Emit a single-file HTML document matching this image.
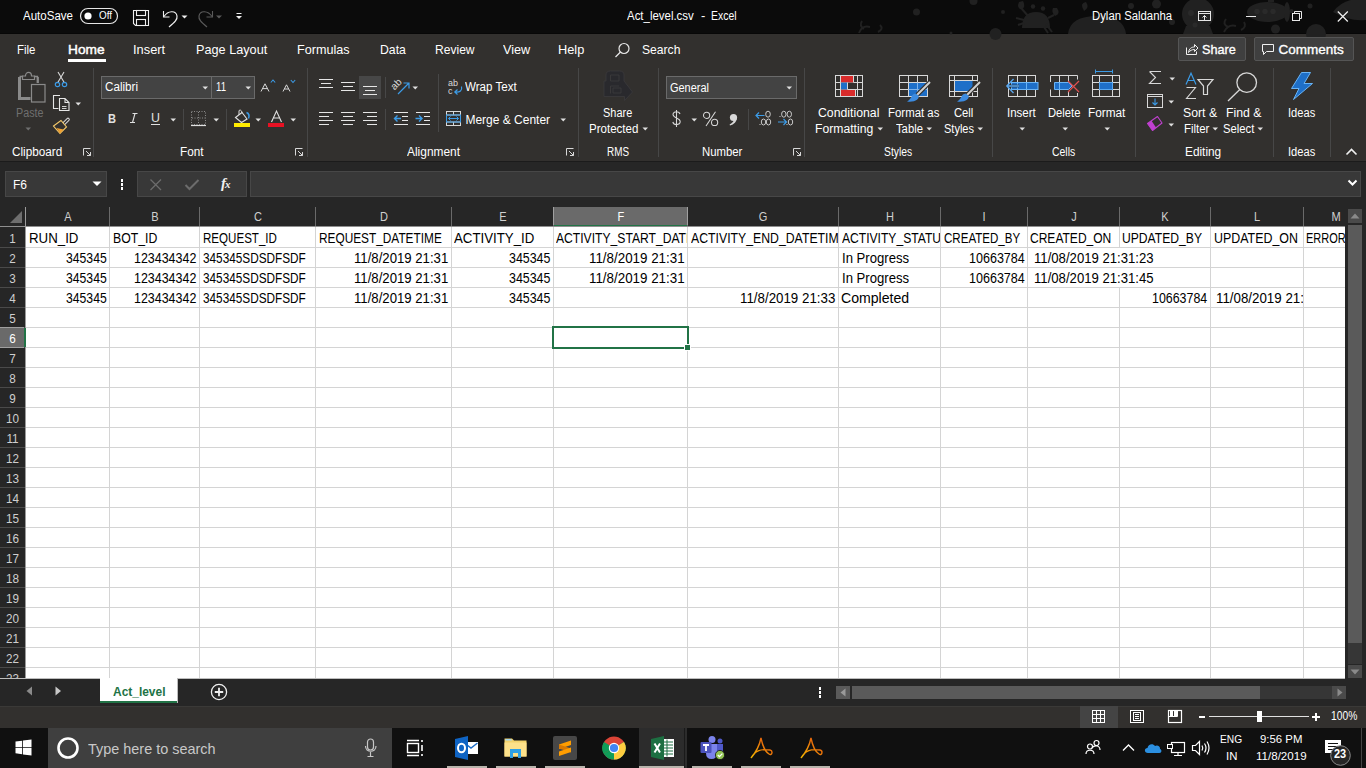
<!DOCTYPE html>
<html><head><meta charset="utf-8">
<style>
*{margin:0;padding:0;box-sizing:border-box}
html,body{width:1366px;height:768px;overflow:hidden;background:#32302e;font-family:"Liberation Sans",sans-serif}
.a{position:absolute}
.t{position:absolute;white-space:nowrap;line-height:1;transform-origin:0 0}
svg{position:absolute;overflow:visible}
</style></head><body>

<div class="a" style="left:0px;top:0px;width:1366px;height:34px;background:#0b0b0b;"></div>
<div class="a" style="left:0px;top:33px;width:1366px;height:1px;background:#070707;"></div>
<div class="a" style="left:0px;top:34px;width:1366px;height:127px;background:#32302e;"></div>
<div class="a" style="left:0px;top:161px;width:1366px;height:1px;background:#1b1b1b;"></div>
<div class="a" style="left:0px;top:162px;width:1366px;height:45px;background:#262626;"></div>
<div class="a" style="left:0px;top:678px;width:1366px;height:28px;background:#262626;"></div>
<div class="a" style="left:0px;top:706px;width:1366px;height:22px;background:#32302e;"></div>
<div class="a" style="left:0px;top:706px;width:1366px;height:1px;background:#3a3937;"></div>
<div class="a" style="left:0px;top:728px;width:1366px;height:40px;background:#101010;"></div>
<div class="a" style="left:26px;top:227px;width:1319px;height:451px;background:#ffffff;"></div>
<div class="a" style="left:0px;top:207px;width:1345px;height:20px;background:#262626;"></div>
<div class="a" style="left:0px;top:227px;width:25px;height:451px;background:#262626;"></div>
<div class="a" style="left:554px;top:207px;width:133px;height:19px;background:#6a6a6a;"></div>
<div class="a" style="left:553px;top:225px;width:135px;height:2px;background:#217346;"></div>
<div class="a" style="left:0px;top:328px;width:24px;height:19px;background:#6a6a6a;"></div>
<div class="a" style="left:24px;top:327px;width:2px;height:21px;background:#217346;"></div>
<svg style="left:0;top:0" width="1366" height="768"><line x1="26" y1="247.5" x2="1345" y2="247.5" stroke="#d4d4d4" stroke-width="1"/><line x1="0" y1="247.5" x2="25" y2="247.5" stroke="#4a4a4a" stroke-width="1"/><line x1="26" y1="267.5" x2="1345" y2="267.5" stroke="#d4d4d4" stroke-width="1"/><line x1="0" y1="267.5" x2="25" y2="267.5" stroke="#4a4a4a" stroke-width="1"/><line x1="26" y1="287.5" x2="1345" y2="287.5" stroke="#d4d4d4" stroke-width="1"/><line x1="0" y1="287.5" x2="25" y2="287.5" stroke="#4a4a4a" stroke-width="1"/><line x1="26" y1="307.5" x2="1345" y2="307.5" stroke="#d4d4d4" stroke-width="1"/><line x1="0" y1="307.5" x2="25" y2="307.5" stroke="#4a4a4a" stroke-width="1"/><line x1="26" y1="327.5" x2="1345" y2="327.5" stroke="#d4d4d4" stroke-width="1"/><line x1="0" y1="327.5" x2="25" y2="327.5" stroke="#4a4a4a" stroke-width="1"/><line x1="26" y1="347.5" x2="1345" y2="347.5" stroke="#d4d4d4" stroke-width="1"/><line x1="0" y1="347.5" x2="25" y2="347.5" stroke="#4a4a4a" stroke-width="1"/><line x1="26" y1="367.5" x2="1345" y2="367.5" stroke="#d4d4d4" stroke-width="1"/><line x1="0" y1="367.5" x2="25" y2="367.5" stroke="#4a4a4a" stroke-width="1"/><line x1="26" y1="387.5" x2="1345" y2="387.5" stroke="#d4d4d4" stroke-width="1"/><line x1="0" y1="387.5" x2="25" y2="387.5" stroke="#4a4a4a" stroke-width="1"/><line x1="26" y1="407.5" x2="1345" y2="407.5" stroke="#d4d4d4" stroke-width="1"/><line x1="0" y1="407.5" x2="25" y2="407.5" stroke="#4a4a4a" stroke-width="1"/><line x1="26" y1="427.5" x2="1345" y2="427.5" stroke="#d4d4d4" stroke-width="1"/><line x1="0" y1="427.5" x2="25" y2="427.5" stroke="#4a4a4a" stroke-width="1"/><line x1="26" y1="447.5" x2="1345" y2="447.5" stroke="#d4d4d4" stroke-width="1"/><line x1="0" y1="447.5" x2="25" y2="447.5" stroke="#4a4a4a" stroke-width="1"/><line x1="26" y1="467.5" x2="1345" y2="467.5" stroke="#d4d4d4" stroke-width="1"/><line x1="0" y1="467.5" x2="25" y2="467.5" stroke="#4a4a4a" stroke-width="1"/><line x1="26" y1="487.5" x2="1345" y2="487.5" stroke="#d4d4d4" stroke-width="1"/><line x1="0" y1="487.5" x2="25" y2="487.5" stroke="#4a4a4a" stroke-width="1"/><line x1="26" y1="507.5" x2="1345" y2="507.5" stroke="#d4d4d4" stroke-width="1"/><line x1="0" y1="507.5" x2="25" y2="507.5" stroke="#4a4a4a" stroke-width="1"/><line x1="26" y1="527.5" x2="1345" y2="527.5" stroke="#d4d4d4" stroke-width="1"/><line x1="0" y1="527.5" x2="25" y2="527.5" stroke="#4a4a4a" stroke-width="1"/><line x1="26" y1="547.5" x2="1345" y2="547.5" stroke="#d4d4d4" stroke-width="1"/><line x1="0" y1="547.5" x2="25" y2="547.5" stroke="#4a4a4a" stroke-width="1"/><line x1="26" y1="567.5" x2="1345" y2="567.5" stroke="#d4d4d4" stroke-width="1"/><line x1="0" y1="567.5" x2="25" y2="567.5" stroke="#4a4a4a" stroke-width="1"/><line x1="26" y1="587.5" x2="1345" y2="587.5" stroke="#d4d4d4" stroke-width="1"/><line x1="0" y1="587.5" x2="25" y2="587.5" stroke="#4a4a4a" stroke-width="1"/><line x1="26" y1="607.5" x2="1345" y2="607.5" stroke="#d4d4d4" stroke-width="1"/><line x1="0" y1="607.5" x2="25" y2="607.5" stroke="#4a4a4a" stroke-width="1"/><line x1="26" y1="627.5" x2="1345" y2="627.5" stroke="#d4d4d4" stroke-width="1"/><line x1="0" y1="627.5" x2="25" y2="627.5" stroke="#4a4a4a" stroke-width="1"/><line x1="26" y1="647.5" x2="1345" y2="647.5" stroke="#d4d4d4" stroke-width="1"/><line x1="0" y1="647.5" x2="25" y2="647.5" stroke="#4a4a4a" stroke-width="1"/><line x1="26" y1="667.5" x2="1345" y2="667.5" stroke="#d4d4d4" stroke-width="1"/><line x1="0" y1="667.5" x2="25" y2="667.5" stroke="#4a4a4a" stroke-width="1"/><line x1="109.5" y1="227" x2="109.5" y2="678" stroke="#d4d4d4" stroke-width="1"/><line x1="109.5" y1="207" x2="109.5" y2="226" stroke="#6a6a6a" stroke-width="1"/><line x1="199.5" y1="227" x2="199.5" y2="678" stroke="#d4d4d4" stroke-width="1"/><line x1="199.5" y1="207" x2="199.5" y2="226" stroke="#6a6a6a" stroke-width="1"/><line x1="315.5" y1="227" x2="315.5" y2="678" stroke="#d4d4d4" stroke-width="1"/><line x1="315.5" y1="207" x2="315.5" y2="226" stroke="#6a6a6a" stroke-width="1"/><line x1="451.5" y1="227" x2="451.5" y2="678" stroke="#d4d4d4" stroke-width="1"/><line x1="451.5" y1="207" x2="451.5" y2="226" stroke="#6a6a6a" stroke-width="1"/><line x1="553.5" y1="227" x2="553.5" y2="678" stroke="#d4d4d4" stroke-width="1"/><line x1="553.5" y1="207" x2="553.5" y2="226" stroke="#6a6a6a" stroke-width="1"/><line x1="687.5" y1="227" x2="687.5" y2="678" stroke="#d4d4d4" stroke-width="1"/><line x1="687.5" y1="207" x2="687.5" y2="226" stroke="#6a6a6a" stroke-width="1"/><line x1="838.5" y1="227" x2="838.5" y2="678" stroke="#d4d4d4" stroke-width="1"/><line x1="838.5" y1="207" x2="838.5" y2="226" stroke="#6a6a6a" stroke-width="1"/><line x1="940.5" y1="227" x2="940.5" y2="678" stroke="#d4d4d4" stroke-width="1"/><line x1="940.5" y1="207" x2="940.5" y2="226" stroke="#6a6a6a" stroke-width="1"/><line x1="1027.5" y1="227" x2="1027.5" y2="678" stroke="#d4d4d4" stroke-width="1"/><line x1="1027.5" y1="207" x2="1027.5" y2="226" stroke="#6a6a6a" stroke-width="1"/><line x1="1119.5" y1="227" x2="1119.5" y2="678" stroke="#d4d4d4" stroke-width="1"/><line x1="1119.5" y1="207" x2="1119.5" y2="226" stroke="#6a6a6a" stroke-width="1"/><line x1="1210.5" y1="227" x2="1210.5" y2="678" stroke="#d4d4d4" stroke-width="1"/><line x1="1210.5" y1="207" x2="1210.5" y2="226" stroke="#6a6a6a" stroke-width="1"/><line x1="1303.5" y1="227" x2="1303.5" y2="678" stroke="#d4d4d4" stroke-width="1"/><line x1="1303.5" y1="207" x2="1303.5" y2="226" stroke="#6a6a6a" stroke-width="1"/><line x1="0" y1="226.5" x2="1345" y2="226.5" stroke="#8f8f8f" stroke-width="1"/><line x1="25.5" y1="207" x2="25.5" y2="678" stroke="#9a9a9a" stroke-width="1"/></svg>
<div class="a" style="left:0px;top:327px;width:24px;height:1px;background:#a0a0a0;"></div>
<div class="a" style="left:0px;top:347px;width:24px;height:1px;background:#a0a0a0;"></div>
<div class="a" style="left:24px;top:328px;width:2px;height:19px;background:#217346;"></div>
<div class="a" style="left:553px;top:207px;width:1px;height:18px;background:#a0a0a0;"></div>
<div class="a" style="left:687px;top:207px;width:1px;height:18px;background:#a0a0a0;"></div>
<svg style="left:0;top:207px" width="25" height="20"><path d="M10 16 L22 4 L22 16 Z" fill="#6e6e6e"/></svg>
<div class="t" style="left:47.5px;width:40px;text-align:center;top:210.00px;font-size:13px;transform:scaleX(0.85);transform-origin:50% 0;color:#d0d0d0">A</div>
<div class="t" style="left:134.5px;width:40px;text-align:center;top:210.00px;font-size:13px;transform:scaleX(0.85);transform-origin:50% 0;color:#d0d0d0">B</div>
<div class="t" style="left:237.5px;width:40px;text-align:center;top:210.00px;font-size:13px;transform:scaleX(0.85);transform-origin:50% 0;color:#d0d0d0">C</div>
<div class="t" style="left:363.5px;width:40px;text-align:center;top:210.00px;font-size:13px;transform:scaleX(0.85);transform-origin:50% 0;color:#d0d0d0">D</div>
<div class="t" style="left:482.5px;width:40px;text-align:center;top:210.00px;font-size:13px;transform:scaleX(0.85);transform-origin:50% 0;color:#d0d0d0">E</div>
<div class="t" style="left:600.5px;width:40px;text-align:center;top:210.00px;font-size:13px;transform:scaleX(0.85);transform-origin:50% 0;color:#ffffff">F</div>
<div class="t" style="left:743.0px;width:40px;text-align:center;top:210.00px;font-size:13px;transform:scaleX(0.85);transform-origin:50% 0;color:#d0d0d0">G</div>
<div class="t" style="left:869.5px;width:40px;text-align:center;top:210.00px;font-size:13px;transform:scaleX(0.85);transform-origin:50% 0;color:#d0d0d0">H</div>
<div class="t" style="left:964.0px;width:40px;text-align:center;top:210.00px;font-size:13px;transform:scaleX(0.85);transform-origin:50% 0;color:#d0d0d0">I</div>
<div class="t" style="left:1053.5px;width:40px;text-align:center;top:210.00px;font-size:13px;transform:scaleX(0.85);transform-origin:50% 0;color:#d0d0d0">J</div>
<div class="t" style="left:1145.0px;width:40px;text-align:center;top:210.00px;font-size:13px;transform:scaleX(0.85);transform-origin:50% 0;color:#d0d0d0">K</div>
<div class="t" style="left:1237.0px;width:40px;text-align:center;top:210.00px;font-size:13px;transform:scaleX(0.85);transform-origin:50% 0;color:#d0d0d0">L</div>
<div class="t" style="left:1315.5px;width:40px;text-align:center;top:210.00px;font-size:13px;transform:scaleX(0.85);transform-origin:50% 0;color:#d0d0d0">M</div>
<div class="a" style="left:0;top:227px;width:25px;height:451px;overflow:hidden">
<div class="t" style="left:0px;width:25px;text-align:center;top:5.00px;font-size:13px;transform:scaleX(0.9);transform-origin:50% 0;color:#cfcfcf">1</div>
<div class="t" style="left:0px;width:25px;text-align:center;top:25.00px;font-size:13px;transform:scaleX(0.9);transform-origin:50% 0;color:#cfcfcf">2</div>
<div class="t" style="left:0px;width:25px;text-align:center;top:45.00px;font-size:13px;transform:scaleX(0.9);transform-origin:50% 0;color:#cfcfcf">3</div>
<div class="t" style="left:0px;width:25px;text-align:center;top:65.00px;font-size:13px;transform:scaleX(0.9);transform-origin:50% 0;color:#cfcfcf">4</div>
<div class="t" style="left:0px;width:25px;text-align:center;top:85.00px;font-size:13px;transform:scaleX(0.9);transform-origin:50% 0;color:#cfcfcf">5</div>
<div class="t" style="left:0px;width:25px;text-align:center;top:105.00px;font-size:13px;transform:scaleX(0.9);transform-origin:50% 0;color:#ffffff">6</div>
<div class="t" style="left:0px;width:25px;text-align:center;top:125.00px;font-size:13px;transform:scaleX(0.9);transform-origin:50% 0;color:#cfcfcf">7</div>
<div class="t" style="left:0px;width:25px;text-align:center;top:145.00px;font-size:13px;transform:scaleX(0.9);transform-origin:50% 0;color:#cfcfcf">8</div>
<div class="t" style="left:0px;width:25px;text-align:center;top:165.00px;font-size:13px;transform:scaleX(0.9);transform-origin:50% 0;color:#cfcfcf">9</div>
<div class="t" style="left:0px;width:25px;text-align:center;top:185.00px;font-size:13px;transform:scaleX(0.9);transform-origin:50% 0;color:#cfcfcf">10</div>
<div class="t" style="left:0px;width:25px;text-align:center;top:205.00px;font-size:13px;transform:scaleX(0.9);transform-origin:50% 0;color:#cfcfcf">11</div>
<div class="t" style="left:0px;width:25px;text-align:center;top:225.00px;font-size:13px;transform:scaleX(0.9);transform-origin:50% 0;color:#cfcfcf">12</div>
<div class="t" style="left:0px;width:25px;text-align:center;top:245.00px;font-size:13px;transform:scaleX(0.9);transform-origin:50% 0;color:#cfcfcf">13</div>
<div class="t" style="left:0px;width:25px;text-align:center;top:265.00px;font-size:13px;transform:scaleX(0.9);transform-origin:50% 0;color:#cfcfcf">14</div>
<div class="t" style="left:0px;width:25px;text-align:center;top:285.00px;font-size:13px;transform:scaleX(0.9);transform-origin:50% 0;color:#cfcfcf">15</div>
<div class="t" style="left:0px;width:25px;text-align:center;top:305.00px;font-size:13px;transform:scaleX(0.9);transform-origin:50% 0;color:#cfcfcf">16</div>
<div class="t" style="left:0px;width:25px;text-align:center;top:325.00px;font-size:13px;transform:scaleX(0.9);transform-origin:50% 0;color:#cfcfcf">17</div>
<div class="t" style="left:0px;width:25px;text-align:center;top:345.00px;font-size:13px;transform:scaleX(0.9);transform-origin:50% 0;color:#cfcfcf">18</div>
<div class="t" style="left:0px;width:25px;text-align:center;top:365.00px;font-size:13px;transform:scaleX(0.9);transform-origin:50% 0;color:#cfcfcf">19</div>
<div class="t" style="left:0px;width:25px;text-align:center;top:385.00px;font-size:13px;transform:scaleX(0.9);transform-origin:50% 0;color:#cfcfcf">20</div>
<div class="t" style="left:0px;width:25px;text-align:center;top:405.00px;font-size:13px;transform:scaleX(0.9);transform-origin:50% 0;color:#cfcfcf">21</div>
<div class="t" style="left:0px;width:25px;text-align:center;top:425.00px;font-size:13px;transform:scaleX(0.9);transform-origin:50% 0;color:#cfcfcf">22</div>
<div class="t" style="left:0px;width:25px;text-align:center;top:445.00px;font-size:13px;transform:scaleX(0.9);transform-origin:50% 0;color:#cfcfcf">23</div>
</div>
<div class="a" style="left:1119px;top:248px;width:1px;height:19px;background:#ffffff;"></div>
<div class="a" style="left:1119px;top:268px;width:1px;height:19px;background:#ffffff;"></div>
<div class="t" style="left:29.00px;top:231.15px;font-size:14px;color:#000000;transform:scaleX(0.9482);">RUN_ID</div>
<div class="t" style="left:112.50px;top:231.15px;font-size:14px;color:#000000;transform:scaleX(0.8764);">BOT_ID</div>
<div class="t" style="left:202.60px;top:231.15px;font-size:14px;color:#000000;transform:scaleX(0.8262);">REQUEST_ID</div>
<div class="t" style="left:318.70px;top:231.15px;font-size:14px;color:#000000;transform:scaleX(0.8457);">REQUEST_DATETIME</div>
<div class="t" style="left:454.20px;top:231.15px;font-size:14px;color:#000000;transform:scaleX(0.9469);">ACTIVITY_ID</div>
<div class="t" style="left:65.60px;top:251.15px;font-size:14px;color:#000000;transform:scaleX(0.8715);">345345</div>
<div class="t" style="left:134.00px;top:251.15px;font-size:14px;color:#000000;transform:scaleX(0.8894);">123434342</div>
<div class="t" style="left:202.60px;top:251.15px;font-size:14px;color:#000000;transform:scaleX(0.8416);">345345SDSDFSDF</div>
<div class="t" style="left:353.90px;top:251.15px;font-size:14px;color:#000000;transform:scaleX(0.9406);">11/8/2019 21:31</div>
<div class="t" style="left:509.00px;top:251.15px;font-size:14px;color:#000000;transform:scaleX(0.8865);">345345</div>
<div class="t" style="left:65.60px;top:271.15px;font-size:14px;color:#000000;transform:scaleX(0.8715);">345345</div>
<div class="t" style="left:134.00px;top:271.15px;font-size:14px;color:#000000;transform:scaleX(0.8894);">123434342</div>
<div class="t" style="left:202.60px;top:271.15px;font-size:14px;color:#000000;transform:scaleX(0.8416);">345345SDSDFSDF</div>
<div class="t" style="left:353.90px;top:271.15px;font-size:14px;color:#000000;transform:scaleX(0.9406);">11/8/2019 21:31</div>
<div class="t" style="left:509.00px;top:271.15px;font-size:14px;color:#000000;transform:scaleX(0.8865);">345345</div>
<div class="t" style="left:65.60px;top:291.15px;font-size:14px;color:#000000;transform:scaleX(0.8715);">345345</div>
<div class="t" style="left:134.00px;top:291.15px;font-size:14px;color:#000000;transform:scaleX(0.8894);">123434342</div>
<div class="t" style="left:202.60px;top:291.15px;font-size:14px;color:#000000;transform:scaleX(0.8416);">345345SDSDFSDF</div>
<div class="t" style="left:353.90px;top:291.15px;font-size:14px;color:#000000;transform:scaleX(0.9406);">11/8/2019 21:31</div>
<div class="t" style="left:509.00px;top:291.15px;font-size:14px;color:#000000;transform:scaleX(0.8865);">345345</div>
<div class="t" style="left:589.20px;top:251.15px;font-size:14px;color:#000000;transform:scaleX(0.9546);">11/8/2019 21:31</div>
<div class="t" style="left:841.60px;top:251.15px;font-size:14px;color:#000000;transform:scaleX(0.9385);">In Progress</div>
<div class="t" style="left:969.00px;top:251.15px;font-size:14px;color:#000000;transform:scaleX(0.8957);">10663784</div>
<div class="t" style="left:589.20px;top:271.15px;font-size:14px;color:#000000;transform:scaleX(0.9546);">11/8/2019 21:31</div>
<div class="t" style="left:841.60px;top:271.15px;font-size:14px;color:#000000;transform:scaleX(0.9385);">In Progress</div>
<div class="t" style="left:969.00px;top:271.15px;font-size:14px;color:#000000;transform:scaleX(0.8957);">10663784</div>
<div class="t" style="left:1033.70px;top:251.15px;font-size:14px;color:#000000;transform:scaleX(0.9388);">11/08/2019 21:31:23</div>
<div class="t" style="left:1033.70px;top:271.15px;font-size:14px;color:#000000;transform:scaleX(0.9388);">11/08/2019 21:31:45</div>
<div class="t" style="left:739.70px;top:291.15px;font-size:14px;color:#000000;transform:scaleX(0.9516);">11/8/2019 21:33</div>
<div class="t" style="left:841.30px;top:291.15px;font-size:14px;color:#000000;transform:scaleX(1.0074);">Completed</div>
<div class="t" style="left:1152.20px;top:291.15px;font-size:14px;color:#000000;transform:scaleX(0.8860);">10663784</div>
<div class="t" style="left:943.60px;top:231.15px;font-size:14px;color:#000000;transform:scaleX(0.8256);">CREATED_BY</div>
<div class="t" style="left:1030.00px;top:231.15px;font-size:14px;color:#000000;transform:scaleX(0.8590);">CREATED_ON</div>
<div class="t" style="left:1122.00px;top:231.15px;font-size:14px;color:#000000;transform:scaleX(0.8667);">UPDATED_BY</div>
<div class="t" style="left:1213.50px;top:231.15px;font-size:14px;color:#000000;transform:scaleX(0.8864);">UPDATED_ON</div>
<div class="a" style="left:554px;top:227px;width:133px;height:80px;overflow:hidden"><div class="t" style="left:2.00px;top:4.15px;font-size:14px;color:#000000;transform:scaleX(0.8658)">ACTIVITY_START_DATETIME</div></div>
<div class="a" style="left:688px;top:227px;width:150px;height:80px;overflow:hidden"><div class="t" style="left:2.80px;top:4.15px;font-size:14px;color:#000000;transform:scaleX(0.8763)">ACTIVITY_END_DATETIME</div></div>
<div class="a" style="left:839px;top:227px;width:101px;height:80px;overflow:hidden"><div class="t" style="left:2.50px;top:4.15px;font-size:14px;color:#000000;transform:scaleX(0.8639)">ACTIVITY_STATUS</div></div>
<div class="a" style="left:1304px;top:227px;width:41px;height:80px;overflow:hidden"><div class="t" style="left:2.30px;top:4.15px;font-size:14px;color:#000000;transform:scaleX(0.7854)">ERROR_MESSAGE</div></div>
<div class="a" style="left:1211px;top:227px;width:92px;height:80px;overflow:hidden"><div class="t" style="left:5.30px;top:64.15px;font-size:14px;color:#000000;transform:scaleX(0.9514)">11/08/2019 21:33:10</div></div>
<div class="a" style="left:552px;top:326px;width:137px;height:23px;background:transparent;border:2px solid #217346"></div>
<div class="a" style="left:684px;top:344px;width:7px;height:7px;background:#ffffff;"></div>
<div class="a" style="left:685px;top:345px;width:5px;height:5px;background:#217346;"></div>
<svg style="left:0;top:0" width="1366" height="33"><g fill="#212121" stroke="none"><circle cx="916.5" cy="12" r="3.5"/><circle cx="973.5" cy="1" r="4"/><circle cx="1003" cy="12" r="2"/><circle cx="995.5" cy="34" r="6"/><circle cx="951" cy="33" r="1.5"/><path d="M1022 28 Q1022 12 1036 12 Q1050 12 1050 28 Z"/><circle cx="1033" cy="6.5" r="2.2"/><circle cx="1043" cy="8.5" r="2.2"/><path d="M1019 2 Q1016 8 1022 10 Q1026 6 1023 1 Z"/><path d="M1057 8 Q1061 14 1055 16 Q1051 12 1053 8 Z"/></g><g stroke="#212121" stroke-width="2" fill="none"><path d="M1022 9 L1028 16"/><path d="M1054 15 L1048 18"/><path d="M1016 18 L1024 20"/><path d="M1018 25 L1024 23"/><path d="M1046 24 L1052 32"/><path d="M1044 27 L1048 33"/><path d="M859 33 Q862 25 870 27 M862 21 Q859 26 864 29 M880 25 Q884 29 878 32"/><path d="M1224 32 Q1228 24 1236 26 M1226 19 Q1222 24 1228 27 M1244 22 Q1247 27 1241 30"/></g><g fill="#212121"><path d="M1068 34 Q1070 16 1097 16 Q1124 16 1126 34 Z"/><path d="M1084 11 Q1079 3 1086 2 Q1090 8 1084 11 Z"/><circle cx="1131" cy="6" r="3"/><circle cx="1156.5" cy="4" r="4.5"/><circle cx="1172" cy="22" r="3"/><circle cx="1198" cy="14" r="16"/><path d="M1186 26 H1210 L1213 34 H1183 Z"/><ellipse cx="1267.5" cy="12" rx="20.5" ry="10"/><ellipse cx="1287" cy="12" rx="3" ry="10"/><path d="M1268 2 V-2 H1274 V2 Z"/><circle cx="1291.5" cy="11" r="2"/><circle cx="1275.5" cy="29" r="4.5"/><circle cx="1310" cy="6" r="2.5"/><circle cx="1316" cy="34" r="10"/><path d="M1333 12 Q1345 -4 1366 0 V20 Q1350 22 1333 12 Z"/></g><g fill="#2a2a2a"><circle cx="1257" cy="11.5" r="2.7"/><circle cx="1265" cy="11.5" r="2.7"/><circle cx="1273" cy="11.5" r="2.7"/><circle cx="1191" cy="13" r="3"/><circle cx="1195" cy="25" r="2.5"/></g></svg>
<div class="t" style="left:22.90px;top:10.22px;font-size:12.5px;color:#ffffff;transform:scaleX(0.9225);">AutoSave</div>
<svg style="left:79px;top:7px" width="42" height="18"><rect x="1.5" y="1.5" width="37" height="15" rx="7.5" fill="none" stroke="#e6e6e6" stroke-width="1.2"/><circle cx="9" cy="9" r="3.6" fill="#fff"/></svg>
<div class="t" style="left:99.00px;top:10.49px;font-size:11px;color:#ffffff;transform:scaleX(0.8966);">Off</div>
<svg style="left:132px;top:9px" width="20" height="20"><path d="M1.5 1.5 H16.5 V16.5 H3.5 L1.5 14.5 Z" fill="none" stroke="#f0f0f0" stroke-width="1.1"/><rect x="4.5" y="1.5" width="9" height="5" fill="none" stroke="#f0f0f0" stroke-width="1.1"/><rect x="4.5" y="10.5" width="9" height="6" fill="none" stroke="#f0f0f0" stroke-width="1.1"/></svg>
<svg style="left:160px;top:8px" width="30" height="20"><path d="M3.5 3 V9 H9.5" fill="none" stroke="#f0f0f0" stroke-width="1.1"/><path d="M4 8.5 C8 2.5 16 2 17 8 C17.6 11.5 15 14 9 19" fill="none" stroke="#f0f0f0" stroke-width="1.2"/><path d="M21.5 7.5 h6 l-3 3z" fill="#f0f0f0"/></svg>
<svg style="left:196px;top:8px" width="30" height="20"><path d="M16.5 3 V9 H10.5" fill="none" stroke="#5a5a5a" stroke-width="1.1"/><path d="M16 8.5 C12 2.5 4 2 3 8 C2.4 11.5 5 14 11 19" fill="none" stroke="#5a5a5a" stroke-width="1.2"/><path d="M20 7.5 h6 l-3 3z" fill="#5a5a5a"/></svg>
<svg style="left:235px;top:12px" width="10" height="10"><rect x="1.5" y="1" width="5" height="1" fill="#f0f0f0"/><path d="M1 4 h6 l-3 3z" fill="#f0f0f0"/></svg>
<div class="t" style="left:627.00px;top:9.72px;font-size:12.5px;color:#ffffff;transform:scaleX(0.9157);">Act_level.csv</div>
<div class="t" style="left:700.70px;top:9.72px;font-size:12.5px;color:#ffffff;transform:scaleX(1.0361);">-</div>
<div class="t" style="left:711.20px;top:9.72px;font-size:12.5px;color:#ffffff;transform:scaleX(0.8347);">Excel</div>
<div class="t" style="left:1091.70px;top:9.92px;font-size:12.5px;color:#ffffff;transform:scaleX(0.9071);">Dylan Saldanha</div>
<svg style="left:1197px;top:10px" width="15" height="12"><rect x="1.5" y="1.5" width="12" height="9" fill="none" stroke="#e6e6e6" stroke-width="1"/><path d="M1.5 3.5 h12" stroke="#e6e6e6"/><path d="M7.5 10.5 V5.5 M5.5 7.5 L7.5 5.5 L9.5 7.5" fill="none" stroke="#e6e6e6"/></svg>
<div class="a" style="left:1246px;top:16px;width:10px;height:1px;background:#e8e8e8;"></div>
<svg style="left:1291px;top:10px" width="12" height="12"><rect x="1.5" y="3.5" width="7" height="7" fill="none" stroke="#e8e8e8"/><path d="M3.5 3.5 V1.5 H10.5 V8.5 H8.5" fill="none" stroke="#e8e8e8"/></svg>
<svg style="left:1337px;top:11px" width="12" height="11"><path d="M0.8 0.5 L10.8 10.5 M10.8 0.5 L0.8 10.5" stroke="#f0f0f0" stroke-width="1.25"/></svg>
<div class="t" style="left:17.40px;top:42.77px;font-size:13.5px;color:#ffffff;transform:scaleX(0.8506);">File</div>
<div class="t" style="left:68.40px;top:42.77px;font-size:13.5px;color:#ffffff;transform:scaleX(1.0167);-webkit-text-stroke:0.45px #fff;">Home</div>
<div class="a" style="left:68px;top:59px;width:38px;height:3px;background:#ffffff;"></div>
<div class="t" style="left:133.20px;top:42.77px;font-size:13.5px;color:#ffffff;transform:scaleX(0.9511);">Insert</div>
<div class="t" style="left:196.00px;top:42.77px;font-size:13.5px;color:#ffffff;transform:scaleX(0.9393);">Page Layout</div>
<div class="t" style="left:297.20px;top:42.77px;font-size:13.5px;color:#ffffff;transform:scaleX(0.9351);">Formulas</div>
<div class="t" style="left:379.50px;top:42.77px;font-size:13.5px;color:#ffffff;transform:scaleX(0.9072);">Data</div>
<div class="t" style="left:435.40px;top:42.77px;font-size:13.5px;color:#ffffff;transform:scaleX(0.8939);">Review</div>
<div class="t" style="left:503.00px;top:42.77px;font-size:13.5px;color:#ffffff;transform:scaleX(0.9398);">View</div>
<div class="t" style="left:558.30px;top:42.77px;font-size:13.5px;color:#ffffff;transform:scaleX(0.9477);">Help</div>
<svg style="left:614px;top:42px" width="18" height="18"><circle cx="10" cy="6.5" r="5" fill="none" stroke="#e8e8e8" stroke-width="1.2"/><path d="M6.5 10 L1.5 15" stroke="#e8e8e8" stroke-width="1.3"/></svg>
<div class="t" style="left:641.60px;top:42.77px;font-size:13.5px;color:#ffffff;transform:scaleX(0.8982);">Search</div>
<div class="a" style="left:1178px;top:37px;width:68px;height:24px;background:#3f3f3f;border:1px solid #555555;border-radius:2px"></div>
<svg style="left:1185px;top:42px" width="14" height="14"><path d="M1.5 5.5 V12.5 H11.5 V9.5" fill="none" stroke="#f0f0f0" stroke-width="1"/><path d="M3.5 10.5 C4 6.5 6.5 5 9.5 5 V2.5 L13 6 L9.5 9.5 V7.5 C7 7.5 5 8.5 3.5 10.5z" fill="none" stroke="#f0f0f0" stroke-width="1"/></svg>
<div class="t" style="left:1201.90px;top:42.77px;font-size:13.5px;color:#ffffff;transform:scaleX(0.9389);-webkit-text-stroke:0.35px #fff;">Share</div>
<div class="a" style="left:1254px;top:37px;width:100px;height:24px;background:#3f3f3f;border:1px solid #555555;border-radius:2px"></div>
<svg style="left:1261px;top:43px" width="14" height="13"><path d="M1.5 1.5 H12.5 V8.5 H5.5 L2.5 11.5 V8.5 H1.5 Z" fill="none" stroke="#f0f0f0" stroke-width="1"/></svg>
<div class="t" style="left:1278.40px;top:42.77px;font-size:13.5px;color:#ffffff;-webkit-text-stroke:0.35px #fff;">Comments</div>
<div class="t" style="left:12.30px;top:146.04px;font-size:12px;color:#ffffff;transform:scaleX(0.9776);">Clipboard</div>
<div class="t" style="left:179.50px;top:146.04px;font-size:12px;color:#ffffff;transform:scaleX(0.9792);">Font</div>
<div class="t" style="left:407.00px;top:146.04px;font-size:12px;color:#ffffff;transform:scaleX(0.9934);">Alignment</div>
<div class="t" style="left:606.60px;top:146.04px;font-size:12px;color:#ffffff;transform:scaleX(0.8255);">RMS</div>
<div class="t" style="left:702.40px;top:146.04px;font-size:12px;color:#ffffff;transform:scaleX(0.9461);">Number</div>
<div class="t" style="left:884.30px;top:146.04px;font-size:12px;color:#ffffff;transform:scaleX(0.8593);">Styles</div>
<div class="t" style="left:1052.30px;top:146.04px;font-size:12px;color:#ffffff;transform:scaleX(0.8705);">Cells</div>
<div class="t" style="left:1185.40px;top:146.04px;font-size:12px;color:#ffffff;transform:scaleX(0.9864);">Editing</div>
<div class="t" style="left:1288.00px;top:146.04px;font-size:12px;color:#ffffff;transform:scaleX(0.9267);">Ideas</div>
<div class="a" style="left:93px;top:68px;width:1px;height:89px;background:#474747;"></div>
<div class="a" style="left:307px;top:68px;width:1px;height:89px;background:#474747;"></div>
<div class="a" style="left:578px;top:68px;width:1px;height:89px;background:#474747;"></div>
<div class="a" style="left:658px;top:68px;width:1px;height:89px;background:#474747;"></div>
<div class="a" style="left:804px;top:68px;width:1px;height:89px;background:#474747;"></div>
<div class="a" style="left:992px;top:68px;width:1px;height:89px;background:#474747;"></div>
<div class="a" style="left:1135px;top:68px;width:1px;height:89px;background:#474747;"></div>
<div class="a" style="left:1273px;top:68px;width:1px;height:89px;background:#474747;"></div>
<div class="a" style="left:1330px;top:68px;width:1px;height:89px;background:#474747;"></div>
<svg style="left:83px;top:148px" width="9" height="9"><path d="M0.5 7.5 V0.5 H7.5" fill="none" stroke="#d8d8d8"/><path d="M3 3 L7.5 7.5 M7.5 4 V7.5 H4" fill="none" stroke="#d8d8d8"/></svg>
<svg style="left:295px;top:148px" width="9" height="9"><path d="M0.5 7.5 V0.5 H7.5" fill="none" stroke="#d8d8d8"/><path d="M3 3 L7.5 7.5 M7.5 4 V7.5 H4" fill="none" stroke="#d8d8d8"/></svg>
<svg style="left:566px;top:148px" width="9" height="9"><path d="M0.5 7.5 V0.5 H7.5" fill="none" stroke="#d8d8d8"/><path d="M3 3 L7.5 7.5 M7.5 4 V7.5 H4" fill="none" stroke="#d8d8d8"/></svg>
<svg style="left:793px;top:148px" width="9" height="9"><path d="M0.5 7.5 V0.5 H7.5" fill="none" stroke="#d8d8d8"/><path d="M3 3 L7.5 7.5 M7.5 4 V7.5 H4" fill="none" stroke="#d8d8d8"/></svg>
<svg style="left:1345px;top:148px" width="13" height="8"><path d="M1.5 6.5 L6.5 1.5 L11.5 6.5" fill="none" stroke="#f0f0f0" stroke-width="1.6"/></svg>
<svg style="left:16px;top:70px" width="32" height="34"><path d="M3.5 7 V28.5 H14.5" fill="none" stroke="#8a8a8a" stroke-width="3"/><path d="M3.5 6.5 H7 M18 6.5 H21.5 V13" fill="none" stroke="#8a8a8a" stroke-width="1.3"/><path d="M21.8 7 V13" stroke="#8a8a8a" stroke-width="2.2"/><path d="M6.5 9.5 V6 H9.5 C9.5 1.2 15.5 1.2 15.5 6 H18.5 V9.5 Z" fill="none" stroke="#8a8a8a" stroke-width="1.2"/><rect x="15.5" y="14.5" width="13.5" height="17.5" fill="none" stroke="#8a8a8a" stroke-width="1.2"/></svg>
<div class="t" style="left:15.50px;top:107.04px;font-size:12px;color:#6f6f6f;transform:scaleX(0.8958);">Paste</div>
<svg style="left:25px;top:127px" width="7" height="4"><path d="M0.5 0.5 h5.5 l-2.75 3z" fill="#6f6f6f"/></svg>
<svg style="left:54px;top:71px" width="14" height="17"><path d="M3.5 12 L10 1 M10.5 12 L4 1" stroke="#d8d8d8" stroke-width="1.1"/><circle cx="3.5" cy="13.5" r="2.2" fill="none" stroke="#3c9be6" stroke-width="1.2"/><circle cx="10.5" cy="13.5" r="2.2" fill="none" stroke="#3c9be6" stroke-width="1.2"/></svg>
<svg style="left:52px;top:94px" width="19" height="18"><path d="M8 1.5 H1.5 V14.5 H6.5" fill="none" stroke="#e6e6e6" stroke-width="1.1"/><path d="M7.5 4.5 H13 L17 8.5 V16.5 H7.5 Z M13 4.5 V8.5 H17" fill="none" stroke="#e6e6e6" stroke-width="1.1"/><path d="M10 12.5 H14.5 M10 14.5 H14.5" stroke="#e6e6e6" stroke-width="0.9"/></svg>
<svg style="left:74.5px;top:102px" width="7" height="4"><path d="M0.5 0.5 h5.5 l-2.75 3z" fill="#e0e0e0"/></svg>
<svg style="left:52px;top:116px" width="19" height="19"><path d="M10.5 9 L16 3.5" stroke="#d8d8d8" stroke-width="3.6" stroke-linecap="round"/><path d="M10.5 9 L16 3.5" stroke="#32302e" stroke-width="1.6" stroke-linecap="round"/><path d="M1.5 10 L9 4.5 L14.5 11 L8 17.5 Z" fill="#32302e" stroke="#f3c86a" stroke-width="1.1"/><path d="M4.5 12 L11.5 13.5 L8 17.5 Z" fill="#f0a030"/></svg>
<div class="a" style="left:101px;top:76px;width:111px;height:23px;background:#434343;border:1px solid #6a6a6a"></div>
<div class="a" style="left:211px;top:76px;width:44px;height:23px;background:#434343;border:1px solid #6a6a6a"></div>
<div class="t" style="left:104.80px;top:81.04px;font-size:12px;color:#ffffff;transform:scaleX(0.9706);">Calibri</div>
<svg style="left:201.5px;top:86px" width="7" height="4"><path d="M0.5 0.5 h5.5 l-2.75 3z" fill="#e0e0e0"/></svg>
<div class="t" style="left:216.00px;top:81.04px;font-size:12px;color:#ffffff;transform:scaleX(0.8032);">11</div>
<svg style="left:244.5px;top:86px" width="7" height="4"><path d="M0.5 0.5 h5.5 l-2.75 3z" fill="#e0e0e0"/></svg>
<svg style="left:260px;top:83px" width="11" height="9"><path d="M1 8.5 L5 0.8 L9 8.5 M2.6 5.6 H7.4" fill="none" stroke="#d8d8d8" stroke-width="1"/></svg>
<svg style="left:270px;top:79px" width="6" height="5"><path d="M0.8 3.5 L3 1 L5.2 3.5" fill="none" stroke="#3c9be6" stroke-width="1.1"/></svg>
<svg style="left:282px;top:84px" width="10" height="8"><path d="M1 7.5 L4.5 0.8 L8 7.5 M2.4 5 H6.6" fill="none" stroke="#d8d8d8" stroke-width="1"/></svg>
<svg style="left:290px;top:79px" width="6" height="5"><path d="M0.8 1 L3 3.5 L5.2 1" fill="none" stroke="#3c9be6" stroke-width="1.1"/></svg>
<div class="t" style="left:108.00px;top:111.70px;font-size:13px;color:#e0e0e0;font-weight:bold;transform:scaleX(0.8511);">B</div>
<svg style="left:129px;top:112px" width="10" height="12"><path d="M3.5 1.5 H8.5 M1 10.5 H6 M6 1.5 L3.5 10.5" fill="none" stroke="#e0e0e0" stroke-width="1.1"/></svg>
<div class="t" style="left:151.00px;top:111.62px;font-size:12.5px;color:#e0e0e0;transform:scaleX(0.9945);">U</div>
<div class="a" style="left:151px;top:124px;width:9px;height:1px;background:#e0e0e0;"></div>
<svg style="left:169.5px;top:118px" width="7" height="4"><path d="M0.5 0.5 h5.5 l-2.75 3z" fill="#e0e0e0"/></svg>
<div class="a" style="left:183px;top:109px;width:1px;height:21px;background:#474747;"></div>
<svg style="left:190px;top:110px" width="17" height="17"><rect x="1.5" y="1.5" width="14" height="13" fill="none" stroke="#8a8a8a" stroke-dasharray="1 1.5"/><path d="M8.5 2 V14 M2 8 H15" stroke="#8a8a8a" stroke-dasharray="1 1.5"/><path d="M1 15.5 H16" stroke="#e0e0e0" stroke-width="1.2"/></svg>
<svg style="left:212.5px;top:118px" width="7" height="4"><path d="M0.5 0.5 h5.5 l-2.75 3z" fill="#e0e0e0"/></svg>
<div class="a" style="left:226px;top:109px;width:1px;height:21px;background:#474747;"></div>
<svg style="left:233px;top:109px" width="19" height="15"><path d="M2.5 8.5 L9 3.5 L14 10 L8.5 13.5 Z" fill="none" stroke="#e0e0e0" stroke-width="1.1"/><path d="M6 6 V2 Q6 0.8 7.5 1.2 Q9 1.8 9 4" fill="none" stroke="#e0e0e0" stroke-width="1"/><path d="M13.5 3.5 C16 4.5 16.5 7 15.5 9.5" fill="none" stroke="#3c9be6" stroke-width="1.5"/></svg>
<div class="a" style="left:234px;top:123px;width:16px;height:4px;background:#ffeb00;"></div>
<svg style="left:255px;top:118px" width="7" height="4"><path d="M0.5 0.5 h5.5 l-2.75 3z" fill="#e0e0e0"/></svg>
<svg style="left:270px;top:110px" width="13" height="13"><path d="M1.5 12 L6.5 1 L11.5 12 M3.4 8 H9.6" fill="none" stroke="#e0e0e0" stroke-width="1.1"/></svg>
<div class="a" style="left:268px;top:123px;width:16px;height:4px;background:#e81123;"></div>
<svg style="left:289.5px;top:118px" width="7" height="4"><path d="M0.5 0.5 h5.5 l-2.75 3z" fill="#e0e0e0"/></svg>
<div class="a" style="left:359px;top:76px;width:22px;height:23px;background:#474747;"></div>
<div class="a" style="left:319px;top:79px;width:14px;height:1px;background:#e6e6e6;"></div>
<div class="a" style="left:321px;top:83px;width:10px;height:1px;background:#e6e6e6;"></div>
<div class="a" style="left:319px;top:87px;width:14px;height:1px;background:#e6e6e6;"></div>
<div class="a" style="left:341px;top:82px;width:14px;height:1px;background:#e6e6e6;"></div>
<div class="a" style="left:343px;top:86px;width:10px;height:1px;background:#e6e6e6;"></div>
<div class="a" style="left:341px;top:90px;width:14px;height:1px;background:#e6e6e6;"></div>
<div class="a" style="left:363px;top:86px;width:14px;height:1px;background:#e6e6e6;"></div>
<div class="a" style="left:365px;top:90px;width:10px;height:1px;background:#e6e6e6;"></div>
<div class="a" style="left:363px;top:94px;width:14px;height:1px;background:#e6e6e6;"></div>
<div class="a" style="left:319px;top:112px;width:14px;height:1px;background:#e6e6e6;"></div>
<div class="a" style="left:319px;top:116px;width:10px;height:1px;background:#e6e6e6;"></div>
<div class="a" style="left:319px;top:120px;width:14px;height:1px;background:#e6e6e6;"></div>
<div class="a" style="left:319px;top:124px;width:10px;height:1px;background:#e6e6e6;"></div>
<div class="a" style="left:341px;top:112px;width:14px;height:1px;background:#e6e6e6;"></div>
<div class="a" style="left:343px;top:116px;width:10px;height:1px;background:#e6e6e6;"></div>
<div class="a" style="left:341px;top:120px;width:14px;height:1px;background:#e6e6e6;"></div>
<div class="a" style="left:343px;top:124px;width:10px;height:1px;background:#e6e6e6;"></div>
<div class="a" style="left:363px;top:112px;width:14px;height:1px;background:#e6e6e6;"></div>
<div class="a" style="left:367px;top:116px;width:10px;height:1px;background:#e6e6e6;"></div>
<div class="a" style="left:363px;top:120px;width:14px;height:1px;background:#e6e6e6;"></div>
<div class="a" style="left:367px;top:124px;width:10px;height:1px;background:#e6e6e6;"></div>
<div class="a" style="left:385px;top:77px;width:1px;height:21px;background:#474747;"></div>
<div class="a" style="left:385px;top:109px;width:1px;height:21px;background:#474747;"></div>
<svg style="left:391px;top:77px" width="20" height="19"><text x="0" y="0" transform="translate(3.5,13.5) rotate(-45)" font-family="Liberation Sans" font-size="10" fill="#d8d8d8">ab</text><path d="M7 17 L17.5 6.5 M12.5 6 H18 V11.5" fill="none" stroke="#3c9be6" stroke-width="1.2"/></svg>
<svg style="left:412px;top:86px" width="7" height="4"><path d="M0.5 0.5 h5.5 l-2.75 3z" fill="#e0e0e0"/></svg>
<div class="a" style="left:394px;top:112px;width:14px;height:1px;background:#e6e6e6;"></div>
<div class="a" style="left:416px;top:112px;width:14px;height:1px;background:#e6e6e6;"></div>
<div class="a" style="left:394px;top:124px;width:14px;height:1px;background:#e6e6e6;"></div>
<div class="a" style="left:416px;top:124px;width:14px;height:1px;background:#e6e6e6;"></div>
<div class="a" style="left:402px;top:116px;width:6px;height:1px;background:#e6e6e6;"></div>
<div class="a" style="left:424px;top:116px;width:6px;height:1px;background:#e6e6e6;"></div>
<div class="a" style="left:402px;top:120px;width:6px;height:1px;background:#e6e6e6;"></div>
<div class="a" style="left:424px;top:120px;width:6px;height:1px;background:#e6e6e6;"></div>
<svg style="left:393px;top:114px" width="9" height="9"><path d="M8 4.5 H1.5 M4.5 1.5 L1.5 4.5 L4.5 7.5" fill="none" stroke="#3c9be6" stroke-width="1.4"/></svg>
<svg style="left:415px;top:114px" width="9" height="9"><path d="M0.5 4.5 H7 M4 1.5 L7 4.5 L4 7.5" fill="none" stroke="#3c9be6" stroke-width="1.4"/></svg>
<div class="a" style="left:438px;top:74px;width:1px;height:58px;background:#474747;"></div>
<svg style="left:447px;top:78px" width="17" height="17"><text x="1" y="8" font-family="Liberation Sans" font-size="9" fill="#d8d8d8">ab</text><text x="1" y="15.5" font-family="Liberation Sans" font-size="9" fill="#d8d8d8">c</text><path d="M14.5 8.5 C15.5 12.5 13 14.5 8 14 M10.5 11.5 L7.8 14 L10.5 16.5" fill="none" stroke="#3c9be6" stroke-width="1.2"/></svg>
<div class="t" style="left:465.10px;top:81.34px;font-size:12px;color:#ffffff;transform:scaleX(0.9664);">Wrap Text</div>
<svg style="left:445px;top:110px" width="17" height="17"><rect x="1.5" y="1.5" width="14" height="14" fill="none" stroke="#d8d8d8"/><path d="M1.5 5 H15.5 M1.5 12 H15.5 M8.5 1.5 V5 M8.5 12 V15.5" stroke="#d8d8d8"/><rect x="1.5" y="5" width="14" height="7" fill="none" stroke="#3c9be6"/><path d="M3.5 8.5 H13.5 M5.5 6.5 L3.5 8.5 L5.5 10.5 M11.5 6.5 L13.5 8.5 L11.5 10.5" fill="none" stroke="#3c9be6"/></svg>
<div class="t" style="left:465.40px;top:113.64px;font-size:12px;color:#ffffff;">Merge & Center</div>
<svg style="left:559.5px;top:118px" width="7" height="4"><path d="M0.5 0.5 h5.5 l-2.75 3z" fill="#e0e0e0"/></svg>
<svg style="left:600px;top:68px" width="36" height="36"><path d="M4 28.5 V13 H6 V7 Q6 3 10.5 3 H19.5 Q24 3 24 7 V13 L32.5 24 L24.5 32.5 V28.5 H14 V28.5 Z" fill="#29292d" stroke="#3b3a3c" stroke-width="0.8"/><path d="M10.5 13 V7 H19 V13 Z M10.5 25.5 V18 H19 M13 20 H21 V25 H13 Z" fill="none" stroke="#3e3c3c" stroke-width="0.8"/></svg>
<div class="t" style="left:602.80px;top:106.84px;font-size:12px;color:#ffffff;transform:scaleX(0.9125);">Share</div>
<div class="t" style="left:588.70px;top:122.84px;font-size:12px;color:#ffffff;transform:scaleX(0.9601);">Protected</div>
<svg style="left:641.5px;top:127px" width="7" height="4"><path d="M0.5 0.5 h5.5 l-2.75 3z" fill="#e0e0e0"/></svg>
<div class="a" style="left:666px;top:76px;width:131px;height:23px;background:#434343;border:1px solid #6a6a6a"></div>
<div class="t" style="left:670.00px;top:81.84px;font-size:12px;color:#ffffff;transform:scaleX(0.9133);">General</div>
<svg style="left:786px;top:86px" width="7" height="4"><path d="M0.5 0.5 h5.5 l-2.75 3z" fill="#e0e0e0"/></svg>
<svg style="left:671px;top:110px" width="11" height="18"><path d="M9 4 C8.5 2.2 7 1.8 5.5 1.8 C3.2 1.8 2 3 2 4.6 C2 8.5 9.2 7.4 9.2 11.6 C9.2 13.5 7.6 14.6 5.5 14.6 C3.5 14.6 2.2 13.6 1.8 12 M5.5 0 V17" fill="none" stroke="#d8d8d8" stroke-width="1.05"/></svg>
<svg style="left:690.5px;top:117.5px" width="7" height="4"><path d="M0.5 0.5 h5.5 l-2.75 3z" fill="#e0e0e0"/></svg>
<svg style="left:702px;top:111px" width="18" height="16"><circle cx="4.6" cy="4.3" r="3.1" fill="none" stroke="#d8d8d8" stroke-width="1.05"/><circle cx="12.6" cy="11.4" r="3.1" fill="none" stroke="#d8d8d8" stroke-width="1.05"/><path d="M13.5 0.8 L4 15" stroke="#d8d8d8" stroke-width="1.05"/></svg>
<svg style="left:728px;top:112px" width="11" height="15"><circle cx="5.5" cy="5.5" r="3.6" fill="#d8d8d8"/><path d="M8.8 5.5 C9 9.5 6 12.5 2 13.5 L1.6 12.4 C4.5 11 6 9 5.8 7.5 Z" fill="#d8d8d8"/></svg>
<div class="a" style="left:748px;top:109px;width:1px;height:21px;background:#474747;"></div>
<svg style="left:754px;top:110px" width="19" height="17"><path d="M10.5 5.5 H2 M5 2.5 L2 5.5 L5 8.5" fill="none" stroke="#3c9be6" stroke-width="1.2"/><ellipse cx="14" cy="4.2" rx="2.3" ry="3" fill="none" stroke="#c8c8c8" stroke-width="1"/><rect x="5.5" y="14" width="1" height="1" fill="#c8c8c8"/><ellipse cx="9.5" cy="12" rx="2.2" ry="3" fill="none" stroke="#c8c8c8" stroke-width="1"/><ellipse cx="14.5" cy="12" rx="2.2" ry="3" fill="none" stroke="#c8c8c8" stroke-width="1"/></svg>
<svg style="left:777px;top:110px" width="19" height="17"><rect x="2.5" y="6" width="1" height="1" fill="#c8c8c8"/><ellipse cx="6.8" cy="4.2" rx="2.2" ry="3" fill="none" stroke="#c8c8c8" stroke-width="1"/><ellipse cx="12.3" cy="4.2" rx="2.2" ry="3" fill="none" stroke="#c8c8c8" stroke-width="1"/><path d="M1 12 H9.5 M6.5 9 L9.5 12 L6.5 15" fill="none" stroke="#3c9be6" stroke-width="1.2"/><rect x="9.5" y="14" width="1" height="1" fill="#c8c8c8"/><ellipse cx="13.5" cy="12" rx="2.2" ry="3" fill="none" stroke="#c8c8c8" stroke-width="1"/></svg>
<svg style="left:834px;top:74px" width="31" height="25"><rect x="6.5" y="1.5" width="13" height="7" fill="#d92b2b"/><rect x="6.5" y="15.5" width="15" height="7" fill="#d92b2b"/><rect x="6.5" y="8.5" width="7" height="7" fill="#1e6fc8"/><rect x="1.5" y="1.5" width="27" height="21" fill="none" stroke="#d8d8d8" stroke-width="1"/><path d="M6.5 1.5 V22.5 M23.5 1.5 V22.5 M1.5 8.5 H6.5 M19.5 8.5 H28.5 M1.5 15.5 H6.5 M13.5 15.5 H28.5 M13.5 8.5 V15.5 M19.5 1.5 V8.5 M21.5 15.5 V22.5" stroke="#d8d8d8" stroke-width="1"/><path d="M6.5 8.5 H19.5 M6.5 15.5 H21.5" stroke="#d8d8d8" stroke-width="1" opacity="0.35"/></svg>
<div class="t" style="left:818.30px;top:106.84px;font-size:12px;color:#ffffff;transform:scaleX(1.0225);">Conditional</div>
<div class="t" style="left:815.40px;top:122.94px;font-size:12px;color:#ffffff;transform:scaleX(1.0148);">Formatting</div>
<svg style="left:876.5px;top:127px" width="7" height="4"><path d="M0.5 0.5 h5.5 l-2.75 3z" fill="#e0e0e0"/></svg>
<svg style="left:898px;top:74px" width="34" height="29"><rect x="10.5" y="8.5" width="19" height="14" fill="#1e6fc8"/><rect x="1.5" y="1.5" width="28" height="21" fill="none" stroke="#d8d8d8"/><path d="M1.5 8.5 H29.5 M1.5 15.5 H10.5 M10.5 1.5 V22.5 M19.5 1.5 V8.5" stroke="#d8d8d8"/><path d="M19.5 8.5 V22.5 M10.5 15.5 H29.5" stroke="#7fb3ea" stroke-width="1"/><path d="M32 8 L19 21" stroke="#32302e" stroke-width="4.5"/><path d="M32 8 L19 21" stroke="#d0d0d0" stroke-width="2"/><path d="M17.5 19.5 C13 20 14 25 9 27.5 C17 28.5 22 25 20.5 21.5 Z" fill="#3c8be0"/></svg>
<div class="t" style="left:887.60px;top:106.84px;font-size:12px;color:#ffffff;transform:scaleX(0.9519);">Format as</div>
<div class="t" style="left:896.40px;top:122.94px;font-size:12px;color:#ffffff;transform:scaleX(0.9373);">Table</div>
<svg style="left:926px;top:127px" width="7" height="4"><path d="M0.5 0.5 h5.5 l-2.75 3z" fill="#e0e0e0"/></svg>
<svg style="left:948px;top:74px" width="34" height="29"><rect x="6.5" y="6.5" width="18" height="11" fill="#1e6fc8"/><rect x="1.5" y="1.5" width="28" height="21" fill="none" stroke="#d8d8d8"/><path d="M1.5 6.5 H29.5 M1.5 17.5 H29.5 M6.5 1.5 V22.5 M24.5 1.5 V6.5 M24.5 17.5 V22.5" stroke="#d8d8d8"/><path d="M32 8 L19 21" stroke="#32302e" stroke-width="4.5"/><path d="M32 8 L19 21" stroke="#d0d0d0" stroke-width="2"/><path d="M17.5 19.5 C13 20 14 25 9 27.5 C17 28.5 22 25 20.5 21.5 Z" fill="#3c8be0"/></svg>
<div class="t" style="left:953.60px;top:106.84px;font-size:12px;color:#ffffff;transform:scaleX(0.9346);">Cell</div>
<div class="t" style="left:944.30px;top:122.94px;font-size:12px;color:#ffffff;transform:scaleX(0.9174);">Styles</div>
<svg style="left:976.5px;top:127px" width="7" height="4"><path d="M0.5 0.5 h5.5 l-2.75 3z" fill="#e0e0e0"/></svg>
<svg style="left:1005px;top:74px" width="35" height="25"><rect x="3.5" y="1.5" width="27" height="21" fill="none" stroke="#d8d8d8"/><path d="M12.5 1.5 V22.5 M21.5 1.5 V22.5" stroke="#d8d8d8"/><rect x="6.5" y="8.5" width="26.5" height="7" fill="#1e6fc8" stroke="#6ab4f5"/><path d="M12.5 8.5 V15.5 M21.5 8.5 V15.5" stroke="#6ab4f5"/><path d="M3 12 H14" stroke="#2d2d2d" stroke-width="2.6"/><path d="M8.5 5 L1.8 12 L8.5 19 M2 12 H14" fill="none" stroke="#5aa8f0" stroke-width="1.3"/></svg>
<div class="t" style="left:1007.20px;top:106.74px;font-size:12px;color:#ffffff;transform:scaleX(0.9600);">Insert</div>
<svg style="left:1018.5px;top:127px" width="7" height="4"><path d="M0.5 0.5 h5.5 l-2.75 3z" fill="#e0e0e0"/></svg>
<svg style="left:1048px;top:74px" width="34" height="25"><path d="M2.5 8 V1.5 H29.5 V5.5 M2.5 15.5 V22.5 H29.5 V19" fill="none" stroke="#d8d8d8"/><path d="M11.5 1.5 V8 M11.5 15.5 V22.5 M20.5 1.5 V7 M20.5 17 V22.5" stroke="#d8d8d8"/><path d="M6.5 8.5 H20.5 L24 12 L20.5 15.5 H6.5 Z" fill="#1e6fc8" stroke="#6ab4f5"/><path d="M11.5 8.5 V15.5" stroke="#6ab4f5"/><path d="M20 7 L31 18 M31 7 L20 18" stroke="#e05050" stroke-width="1.2"/></svg>
<div class="t" style="left:1047.60px;top:106.74px;font-size:12px;color:#ffffff;transform:scaleX(0.9337);">Delete</div>
<svg style="left:1061.5px;top:127px" width="7" height="4"><path d="M0.5 0.5 h5.5 l-2.75 3z" fill="#e0e0e0"/></svg>
<svg style="left:1090px;top:69px" width="33" height="30"><path d="M6 2.5 H22 M5.5 0.5 V4.5 M22.5 0.5 V4.5" stroke="#3c9be6" stroke-width="1"/><rect x="2.5" y="6.5" width="27" height="21" fill="none" stroke="#d8d8d8"/><path d="M2.5 13.5 H29.5 M2.5 20.5 H29.5 M9.5 6.5 V27.5 M22.5 6.5 V27.5" stroke="#d8d8d8"/><rect x="9.5" y="13.5" width="13" height="7" fill="#1e6fc8" stroke="#5aa8f0"/></svg>
<div class="t" style="left:1087.50px;top:106.74px;font-size:12px;color:#ffffff;transform:scaleX(0.9842);">Format</div>
<svg style="left:1104px;top:127px" width="7" height="4"><path d="M0.5 0.5 h5.5 l-2.75 3z" fill="#e0e0e0"/></svg>
<svg style="left:1148px;top:70px" width="15" height="16"><path d="M1.5 1.5 H13 M1.5 1.5 L7.5 7.5 L1.5 13.5 H13" fill="none" stroke="#d8d8d8" stroke-width="1.1"/></svg>
<svg style="left:1168.5px;top:77px" width="7" height="4"><path d="M0.5 0.5 h5.5 l-2.75 3z" fill="#e0e0e0"/></svg>
<svg style="left:1146px;top:93px" width="18" height="16"><rect x="1.5" y="1.5" width="15" height="13" fill="none" stroke="#d8d8d8"/><path d="M1.5 3.5 H16.5" stroke="#d8d8d8" stroke-width="1"/><path d="M9 5.5 V12 M6.5 9.5 L9 12 L11.5 9.5" fill="none" stroke="#3c9be6" stroke-width="1.1"/></svg>
<svg style="left:1168px;top:100px" width="7" height="4"><path d="M0.5 0.5 h5.5 l-2.75 3z" fill="#e0e0e0"/></svg>
<svg style="left:1145px;top:115px" width="19" height="17"><path d="M2.5 8.5 L12.5 1.5 L17 8 L7.5 15.5 Z" fill="none" stroke="#c040d0" stroke-width="1.1" stroke-linejoin="round"/><path d="M2.5 8.5 L6.5 5.7 L11 12.4 L7.5 15.5 Z" fill="#c040d0"/></svg>
<svg style="left:1168px;top:123px" width="7" height="4"><path d="M0.5 0.5 h5.5 l-2.75 3z" fill="#e0e0e0"/></svg>
<svg style="left:1184px;top:72px" width="14" height="28"><path d="M2 12.5 L7 1.2 L12 12.5 M3.8 8.5 H10.2" fill="none" stroke="#3c9be6" stroke-width="1.2"/><path d="M2.5 15.5 H11.5 L2.5 26.5 H12" fill="none" stroke="#d8d8d8" stroke-width="1.1"/></svg>
<svg style="left:1197px;top:78px" width="18" height="18"><path d="M1 1.5 H16 L10.5 8 V16.5 H6.5 V8 Z" fill="none" stroke="#d8d8d8" stroke-width="1.2"/></svg>
<div class="t" style="left:1182.90px;top:106.64px;font-size:12px;color:#ffffff;transform:scaleX(1.0225);">Sort &</div>
<div class="t" style="left:1183.60px;top:122.64px;font-size:12px;color:#ffffff;transform:scaleX(0.9531);">Filter</div>
<svg style="left:1211.5px;top:127px" width="7" height="4"><path d="M0.5 0.5 h5.5 l-2.75 3z" fill="#e0e0e0"/></svg>
<svg style="left:1226px;top:71px" width="34" height="32"><circle cx="20.7" cy="11.6" r="9.8" fill="none" stroke="#d8d8d8" stroke-width="1.3"/><path d="M13.8 18.5 L2 30" stroke="#d8d8d8" stroke-width="1.3"/></svg>
<div class="t" style="left:1225.50px;top:106.64px;font-size:12px;color:#ffffff;transform:scaleX(1.0231);">Find &</div>
<div class="t" style="left:1223.00px;top:122.64px;font-size:12px;color:#ffffff;transform:scaleX(0.9385);">Select</div>
<svg style="left:1256.5px;top:127px" width="7" height="4"><path d="M0.5 0.5 h5.5 l-2.75 3z" fill="#e0e0e0"/></svg>
<svg style="left:1288px;top:70px" width="28" height="32"><path d="M13.5 2.5 H22.5 L16 13.5 H24.5 L5.5 29.5 L11 18.5 H3.5 Z" fill="#1e6fc8" stroke="#6ab4f5" stroke-width="1" stroke-linejoin="round"/></svg>
<div class="t" style="left:1288.00px;top:106.84px;font-size:12px;color:#ffffff;transform:scaleX(0.9267);">Ideas</div>
<div class="a" style="left:5px;top:171px;width:102px;height:26px;background:#383838;border:1px solid #474747"></div>
<div class="t" style="left:12.50px;top:178.92px;font-size:12.5px;color:#ffffff;transform:scaleX(0.9589);">F6</div>
<svg style="left:92px;top:181px" width="10" height="6"><path d="M0.5 0.5 h9 l-4.5 4.5z" fill="#ffffff"/></svg>
<div class="a" style="left:121px;top:179px;width:2px;height:2.5px;background:#ffffff;"></div>
<div class="a" style="left:121px;top:183px;width:2px;height:2.5px;background:#ffffff;"></div>
<div class="a" style="left:121px;top:187px;width:2px;height:2.5px;background:#ffffff;"></div>
<div class="a" style="left:137px;top:171px;width:110px;height:26px;background:#383838;border:1px solid #474747"></div>
<svg style="left:149px;top:178px" width="14" height="13"><path d="M1.5 1.5 L12 12 M12 1.5 L1.5 12" stroke="#6c6c6c" stroke-width="1.3"/></svg>
<svg style="left:184px;top:178px" width="16" height="13"><path d="M1.5 7 L5.5 11 L14.5 2" fill="none" stroke="#6c6c6c" stroke-width="2"/></svg>
<div class="t" style="left:221px;top:176px;font-family:'Liberation Serif',serif;font-style:italic;font-weight:bold;font-size:15px;color:#f0f0f0;letter-spacing:-1px">f<span style="font-size:11px">x</span></div>
<div class="a" style="left:250px;top:171px;width:1111px;height:26px;background:#383838;border:1px solid #474747"></div>
<svg style="left:1347px;top:179px" width="11" height="8"><path d="M1.5 1.5 L5.5 5.5 L9.5 1.5" fill="none" stroke="#ffffff" stroke-width="2"/></svg>
<div class="a" style="left:1345px;top:207px;width:21px;height:471px;background:#262626;"></div>
<div class="a" style="left:1348px;top:209px;width:14px;height:14px;background:#4a4a4a;"></div>
<svg style="left:1350px;top:213px" width="10" height="6"><path d="M0.5 5.5 L5 0.5 L9.5 5.5z" fill="#8a8a8a"/></svg>
<div class="a" style="left:1348px;top:225px;width:14px;height:418px;background:#5a5a5a;"></div>
<div class="a" style="left:1348px;top:643px;width:14px;height:21px;background:#363636;"></div>
<div class="a" style="left:1348px;top:665px;width:14px;height:13px;background:#4a4a4a;"></div>
<svg style="left:1350px;top:669px" width="10" height="6"><path d="M0.5 0.5 L9.5 0.5 L5 5.5z" fill="#8a8a8a"/></svg>
<svg style="left:26px;top:686px" width="7" height="10"><path d="M6 0.5 L0.5 5 L6 9.5z" fill="#8a8a8a"/></svg>
<svg style="left:55px;top:686px" width="7" height="10"><path d="M0.5 0.5 L6 5 L0.5 9.5z" fill="#c8c8c8"/></svg>
<div class="a" style="left:100px;top:678px;width:78px;height:25px;background:#ffffff;"></div>
<div class="a" style="left:100px;top:701px;width:78px;height:2px;background:#217346;"></div>
<div class="a" style="left:0px;top:678px;width:100px;height:1px;background:#bdbdbd;"></div>
<div class="a" style="left:178px;top:678px;width:1167px;height:1px;background:#bdbdbd;"></div>
<div class="a" style="left:177px;top:678px;width:1px;height:25px;background:#bdbdbd;"></div>
<div class="t" style="left:112.50px;top:685.20px;font-size:13px;color:#217346;font-weight:bold;transform:scaleX(0.9194);">Act_level</div>
<svg style="left:210px;top:683px" width="18" height="18"><circle cx="9" cy="9" r="7.6" fill="none" stroke="#f0f0f0" stroke-width="1.3"/><path d="M9 4.8 V13.2 M4.8 9 H13.2" stroke="#f0f0f0" stroke-width="1.8"/></svg>
<div class="a" style="left:819px;top:687px;width:2px;height:2.5px;background:#ffffff;"></div>
<div class="a" style="left:819px;top:691px;width:2px;height:2.5px;background:#ffffff;"></div>
<div class="a" style="left:819px;top:695px;width:2px;height:2.5px;background:#ffffff;"></div>
<div class="a" style="left:836px;top:686px;width:14px;height:13px;background:#5a5a5a;"></div>
<svg style="left:840px;top:688px" width="6" height="10"><path d="M5.5 0.5 L0.5 4.5 L5.5 8.5z" fill="#9a9a9a"/></svg>
<div class="a" style="left:852px;top:686px;width:408px;height:13px;background:#5a5a5a;"></div>
<div class="a" style="left:1260px;top:686px;width:72px;height:13px;background:#363636;"></div>
<div class="a" style="left:1332px;top:686px;width:14px;height:13px;background:#4a4a4a;"></div>
<svg style="left:1337px;top:688px" width="6" height="10"><path d="M0.5 0.5 L5.5 4.5 L0.5 8.5z" fill="#8a8a8a"/></svg>
<div class="a" style="left:1080px;top:706px;width:38px;height:22px;background:#444444;"></div>
<svg style="left:1091px;top:709px" width="15" height="15"><rect x="1.5" y="1.5" width="12" height="12" fill="none" stroke="#ffffff"/><path d="M5.5 1.5 V13.5 M9.5 1.5 V13.5 M1.5 5.5 H13.5 M1.5 9.5 H13.5" stroke="#ffffff"/></svg>
<svg style="left:1129px;top:709px" width="16" height="15"><rect x="1.5" y="1.5" width="13" height="12" fill="none" stroke="#ffffff" stroke-width="1"/><rect x="4.5" y="3.5" width="7" height="8" fill="none" stroke="#ffffff"/><path d="M6 5.5 H10 M6 7.5 H10 M6 9.5 H10" stroke="#fff"/></svg>
<svg style="left:1167px;top:709px" width="16" height="15"><rect x="1.5" y="1.5" width="13" height="12" fill="none" stroke="#ffffff" stroke-width="1.2"/><rect x="3" y="2" width="3" height="5" fill="#fff"/><rect x="7" y="2" width="3" height="5" fill="#fff"/><path d="M10.5 1.5 V7.5 H1.5" fill="none" stroke="#fff"/></svg>
<div class="a" style="left:1199px;top:716px;width:6px;height:2px;background:#ffffff;"></div>
<div class="a" style="left:1209px;top:716px;width:100px;height:1px;background:#e0e0e0;"></div>
<div class="a" style="left:1257px;top:711px;width:5px;height:11px;background:#ffffff;"></div>
<div class="a" style="left:1312px;top:716px;width:8px;height:2px;background:#ffffff;"></div>
<div class="a" style="left:1315px;top:713px;width:2px;height:8px;background:#ffffff;"></div>
<div class="t" style="left:1331.40px;top:710.34px;font-size:12px;color:#ffffff;transform:scaleX(0.8567);">100%</div>
<div class="a" style="left:48px;top:728px;width:344px;height:40px;background:#3f3f3f;"></div>
<svg style="left:15px;top:739px" width="18" height="18"><path d="M0.5 2.6 L7.2 1.7 V8 H0.5z M8 1.6 L16.5 0.4 V8 H8z M0.5 8.8 H7.2 V15.2 L0.5 14.3z M8 8.8 H16.5 V16.6 L8 15.4z" fill="#ffffff"/></svg>
<svg style="left:56px;top:736px" width="24" height="24"><circle cx="12" cy="12" r="9.5" fill="none" stroke="#ffffff" stroke-width="2.6"/></svg>
<div class="t" style="left:88.00px;top:741.30px;font-size:15px;color:#c8c8c8;transform:scaleX(0.9619);">Type here to search</div>
<svg style="left:364px;top:738px" width="14" height="20"><rect x="3.5" y="1" width="6" height="11" rx="3" fill="none" stroke="#c6c6c6" stroke-width="1.2"/><path d="M1.5 8 C1.5 15 12 15 12 8 M6.5 14 V18 M3.5 18.5 H9.5" fill="none" stroke="#c6c6c6" stroke-width="1.2"/></svg>
<svg style="left:406px;top:739px" width="20" height="18"><rect x="1.5" y="4.5" width="11" height="9" fill="none" stroke="#fff" stroke-width="1.4"/><path d="M1 1.5 H13 M1 16.5 H13" stroke="#fff" stroke-width="1.4"/><path d="M16 1 V3 M16 6 V12 M16 15 V17" stroke="#fff" stroke-width="1.6"/></svg>
<svg style="left:455px;top:736px" width="24" height="24"><rect x="9" y="6" width="14" height="12" fill="#ffffff"/><path d="M9.5 7 L16 12 L22.5 7" fill="none" stroke="#1a6bc6" stroke-width="1.4"/><path d="M0 3 L13 0 V24 L0 21z" fill="#0f64c4"/><ellipse cx="6.5" cy="12" rx="3.5" ry="4.3" fill="none" stroke="#fff" stroke-width="2"/></svg>
<svg style="left:504px;top:736px" width="24" height="24"><path d="M0.5 2.5 H8 L10 4.5 H22.5 V20.5 H0.5z" fill="#f3d36c"/><path d="M0.5 6.5 H22.5 V20.5 H0.5z" fill="#fde18a"/><path d="M1.5 3 H7 L8 4.5 H1.5z" fill="#a8d8f0"/><path d="M6 13 H17 V22 H14 V17 H9 V22 H6z" fill="#2ea0e6"/></svg>
<svg style="left:553px;top:736px" width="24" height="24"><rect x="0" y="0" width="24" height="24" rx="2" fill="#474747"/><path d="M6 13 L18 9 V4.5 L6 8.5 Z" fill="#ff9d00"/><path d="M6 8.5 L18 12.5 V16.5 L6 12.5 Z" fill="#d97800"/><path d="M6 15.5 L18 11.5 V16 L6 20 Z" fill="#ff9d00"/></svg>
<svg style="left:602px;top:736px" width="24" height="24"><circle cx="12" cy="12" r="11.5" fill="#db4437"/><path d="M12 12 L1.6 17.7 A11.5 11.5 0 0 1 2 6 Z" fill="#0f9d58"/><path d="M12 12 L22 6 A11.5 11.5 0 0 1 12 23.5 L1.6 17.7 Z" fill="#0f9d58"/><path d="M12 12 L22 6 A11.5 11.5 0 0 1 12 23.5 Z" fill="#ffcd40"/><path d="M12 12 L12 23.5 A11.5 11.5 0 0 1 2 18 Z" fill="#0f9d58"/><circle cx="12" cy="12" r="5.2" fill="#fff"/><circle cx="12" cy="12" r="4.1" fill="#4285f4"/></svg>
<div class="a" style="left:639px;top:728px;width:48px;height:40px;background:#2c2c2c;"></div>
<div class="a" style="left:684px;top:728px;width:1px;height:40px;background:#1a1a1a;"></div>
<svg style="left:651px;top:736px" width="24" height="24"><rect x="11" y="3" width="12" height="18" fill="#ffffff"/><path d="M12 6 H22 M12 9 H22 M12 12 H22 M12 15 H22 M12 18 H22 M16 3.5 V20.5" stroke="#1d6f42" stroke-width="1"/><path d="M0 3 L13 0 V24 L0 21z" fill="#1d6f42"/><path d="M3.5 7.5 L9 16.5 M9 7.5 L3.5 16.5" stroke="#fff" stroke-width="2"/></svg>
<svg style="left:700px;top:736px" width="26" height="24"><circle cx="12" cy="3.5" r="3.5" fill="#7b83eb"/><circle cx="20" cy="5" r="2.5" fill="#5059c9"/><path d="M15 8 H23 V16 Q23 20 19 20 H15z" fill="#5059c9"/><path d="M6 8 H17 V17 Q17 23 11.5 23 Q6 23 6 17z" fill="#7b83eb"/><rect x="0.5" y="6" width="11" height="11" rx="1" fill="#4b53bc"/><path d="M3 9 H9 M6 9 V15" stroke="#fff" stroke-width="1.8"/><circle cx="20" cy="19" r="4.6" fill="#92c353" stroke="#111" stroke-width="0.8"/><path d="M17.8 19 L19.4 20.6 L22.4 17.6" fill="none" stroke="#fff" stroke-width="1.3"/></svg>
<svg style="left:750px;top:737px" width="23" height="23"><path d="M1 21 C5 14 10 11.5 20 13 C23 13.5 22.5 19 19 17 C14 14 12 6 11 1 C10 6 7 14 1 21" fill="none" stroke="url(#acg)" stroke-width="1.4"/><defs><linearGradient id="acg" x1="0" y1="1" x2="1" y2="0"><stop offset="0" stop-color="#f5b800"/><stop offset="1" stop-color="#e24a10"/></linearGradient></defs></svg>
<svg style="left:800px;top:737px" width="23" height="23"><path d="M1 21 C5 14 10 11.5 20 13 C23 13.5 22.5 19 19 17 C14 14 12 6 11 1 C10 6 7 14 1 21" fill="none" stroke="url(#acg)" stroke-width="1.4"/><defs><linearGradient id="acg" x1="0" y1="1" x2="1" y2="0"><stop offset="0" stop-color="#f5b800"/><stop offset="1" stop-color="#e24a10"/></linearGradient></defs></svg>
<div class="a" style="left:447px;top:766px;width:40px;height:2px;background:#b8b4ac;"></div>
<div class="a" style="left:496px;top:766px;width:40px;height:2px;background:#b8b4ac;"></div>
<div class="a" style="left:545px;top:766px;width:40px;height:2px;background:#b8b4ac;"></div>
<div class="a" style="left:639px;top:766px;width:45px;height:2px;background:#b8b4ac;"></div>
<div class="a" style="left:692px;top:766px;width:40px;height:2px;background:#b8b4ac;"></div>
<div class="a" style="left:741px;top:766px;width:40px;height:2px;background:#b8b4ac;"></div>
<div class="a" style="left:790px;top:766px;width:40px;height:2px;background:#b8b4ac;"></div>
<svg style="left:1085px;top:739px" width="17" height="17"><circle cx="5" cy="7.5" r="2.5" fill="none" stroke="#fff" stroke-width="1.2"/><circle cx="11.5" cy="4" r="2.5" fill="none" stroke="#fff" stroke-width="1.2"/><path d="M1 15 C1 10 9 10 9 15 M7 9 C9 6 15 6 15 11" fill="none" stroke="#fff" stroke-width="1.2"/></svg>
<svg style="left:1122px;top:743px" width="14" height="9"><path d="M1 7.5 L6.5 2 L12 7.5" fill="none" stroke="#fff" stroke-width="1.3"/></svg>
<svg style="left:1144px;top:742px" width="18" height="12"><path d="M4 11 C0 11 0 6 3.5 6 C4 2 9 1 11 4 C13 2.5 16.5 4 16 7 C18 7.5 18 11 15.5 11z" fill="#2b8fe0"/></svg>
<svg style="left:1167px;top:741px" width="20" height="16"><rect x="4.5" y="1.5" width="13" height="10" fill="none" stroke="#fff" stroke-width="1.2"/><path d="M11 11.5 V14.5 M7 14.5 H15" stroke="#fff" stroke-width="1.2"/><rect x="0.5" y="3.5" width="5" height="4" fill="#111" stroke="#fff"/></svg>
<svg style="left:1191px;top:740px" width="20" height="16"><path d="M1.5 5.5 H4.5 L8.5 1.5 V14.5 L4.5 10.5 H1.5z" fill="none" stroke="#fff" stroke-width="1.2"/><path d="M11 5.5 Q12.5 8 11 10.5 M13.5 3.5 Q16.5 8 13.5 12.5 M16 1.5 Q20 8 16 14.5" fill="none" stroke="#fff" stroke-width="1.2"/></svg>
<div class="t" style="left:1219.50px;top:733.87px;font-size:11.5px;color:#ffffff;transform:scaleX(0.8876);">ENG</div>
<div class="t" style="left:1225.60px;top:750.97px;font-size:11.5px;color:#ffffff;transform:scaleX(0.9913);">IN</div>
<div class="t" style="left:1259.60px;top:733.87px;font-size:11.5px;color:#ffffff;transform:scaleX(0.9895);">9:56 PM</div>
<div class="t" style="left:1256.00px;top:750.97px;font-size:11.5px;color:#ffffff;transform:scaleX(1.0060);">11/8/2019</div>
<div class="a" style="left:1325px;top:740px;width:16px;height:13px;background:#ffffff;"></div>
<div class="a" style="left:1328px;top:743px;width:10px;height:1px;background:#111111;"></div>
<div class="a" style="left:1328px;top:746px;width:10px;height:1px;background:#111111;"></div>
<div class="a" style="left:1328px;top:749px;width:10px;height:1px;background:#111111;"></div>
<svg style="left:1328px;top:744px" width="26" height="24"><circle cx="12.5" cy="11.5" r="9.8" fill="#262626" stroke="#8a8a8a" stroke-width="1"/></svg>
<div class="t" style="left:1334.00px;top:748.42px;font-size:12.5px;color:#ffffff;font-weight:bold;transform:scaleX(0.8777);">23</div>
<div class="a" style="left:1361px;top:728px;width:1px;height:40px;background:#444444;"></div>
</body></html>
